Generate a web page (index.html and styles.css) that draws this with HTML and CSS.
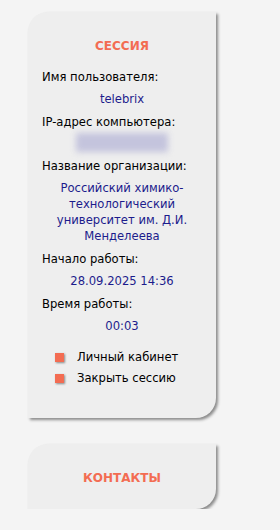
FILE: index.html
```html
<!DOCTYPE html>
<html lang="ru">
<head>
  <meta charset="UTF-8">
  <title>Сессия</title>
  <link rel="stylesheet" href="styles.css">
</head>
<body>
  <div class="panel">
    <h3 class="panel-title">СЕССИЯ</h3>

    <div class="field-label">Имя пользователя:</div>
    <div class="field-value">telebrix</div>

    <div class="field-label">IP-адрес компьютера:</div>
    <div class="field-value field-hidden"><span class="blurred"></span></div>

    <div class="field-label">Название организации:</div>
    <div class="field-value">Российский химико-технологический университет им. Д.И. Менделеева</div>

    <div class="field-label">Начало работы:</div>
    <div class="field-value">28.09.2025 14:36</div>

    <div class="field-label">Время работы:</div>
    <div class="field-value">00:03</div>

    <ul class="menu">
      <li>Личный кабинет</li>
      <li>Закрыть сессию</li>
    </ul>
  </div>

  <div class="panel panel-small">
    <h3 class="panel-title">КОНТАКТЫ</h3>
  </div>
</body>
</html>
```

FILE: styles.css
```css
body { margin: 0; background: #f4f4f4; font-family: "DejaVu Sans", Verdana, sans-serif; font-size: 11.6px; color: #000; }

.panel {
  width: 160px; margin: 12px 0 0 28px; padding: 26px 14px 27px;
  background: #eeeeee; border-radius: 20px 0 20px 0;
  box-shadow: 2px 2px 3px #8a8a8a;
}
.panel-small { margin-top: 26px; padding: 26px 14px 23px; }

.panel-title {
  margin: 0 0 15px; text-align: center; font-size: 12px; line-height: 16px;
  font-weight: bold; color: #f36c52;
}
.panel-small .panel-title { margin: 0; }

.field-label { line-height: 16px; margin-top: 7px; }
.field-value { line-height: 16px; margin-top: 6px; text-align: center; color: #1c1c8c; }
.field-hidden { margin-top: 3px; }
.field-hidden + .field-label { margin-top: 6px; }

.blurred {
  display: block; width: 92px; height: 19px; margin: 0 auto;
  background: #c4c4dd; filter: blur(3px);
}

.menu { list-style: none; margin: 15px 0 0; padding: 0 0 0 13px; }
.menu li { line-height: 16px; margin-bottom: 5px; padding-left: 22px; position: relative; }
.menu li::before {
  content: ""; position: absolute; left: 0; top: 4px; width: 9px; height: 9px;
  background: #f36c52; box-shadow: 1px 1px 2px #888;
}
```
